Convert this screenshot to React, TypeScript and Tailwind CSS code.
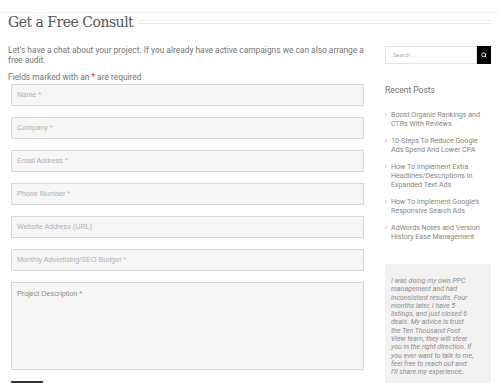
import { Search } from 'lucide-react';

const fields = [
  'Name *',
  'Company *',
  'Email Address *',
  'Phone Number *',
  'Website Address (URL)',
  'Monthly Advertising/SEO Budget *',
];

const posts = [
  ['Boost Organic Rankings and', 'CTRs With Reviews'],
  ['10-Steps To Reduce Google', 'Ads Spend And Lower CPA'],
  ['How To Implement Extra', 'Headlines/Descriptions in', 'Expanded Text Ads'],
  ['How To Implement Google’s', 'Responsive Search Ads'],
  ['AdWords Notes and Version', 'History Ease Management'],
];

const quote = [
  'I was doing my own PPC',
  'management and had',
  'inconsistent results. Four',
  'months later, I have 5',
  'listings, and just closed 6',
  'deals. My advice is trust',
  'the Ten Thousand Foot',
  'View team, they will steer',
  'you in the right direction. If',
  'you ever want to talk to me,',
  'feel free to reach out and',
  'I’ll share my experience..',
];

export default function App() {
  return (
    <div className="w-[500px] h-[383px] overflow-hidden bg-white font-['Roboto',sans-serif]">
      <div className="h-[12px]" />
      <div className="h-[1px] bg-[#f4f4f4]" />
      {/* title row */}
      <div className="flex items-center pl-[8px] pr-[9px] h-[15px] mt-[1px]">
        <h1 className="font-['DejaVu_Serif',serif] text-[14px] leading-none tracking-[-0.5px] text-[#555555] whitespace-nowrap">
          Get a Free Consult
        </h1>
        <div className="flex-1 ml-[5px] flex flex-col gap-[2px]">
          <div className="h-[1px] bg-[#ececec]" />
          <div className="h-[1px] bg-[#ececec]" />
        </div>
      </div>

      <div className="flex pl-[8px] mt-[16px]">
        {/* main column */}
        <div className="w-[356px]">
          <p className="text-[8.4px] leading-[10px] text-[#747474]">
            Let’s have a chat about your project. If you already have active campaigns we can also arrange a free audit.
          </p>
          <p className="mt-[7px] text-[8.4px] leading-[10px] text-[#747474]">
            Fields marked with an <span className="text-[#e0201c]">*</span> are required
          </p>
          <div className="ml-[3px] mt-[2px] flex flex-col gap-[11px]">
            {fields.map((f) => (
              <div
                key={f}
                className="h-[22px] border border-[#d9d9d9] bg-[#f6f6f6] flex items-center pl-[5px] font-['Liberation_Sans',sans-serif] text-[7.2px] text-[#b0b0b0]"
              >
                {f}
              </div>
            ))}
            <div className="h-[88px] border border-[#d9d9d9] bg-[#f6f6f6] pl-[5px] pt-[6px] font-['Liberation_Sans',sans-serif] text-[7.2px] text-[#8a8a8a]">
              Project Description *
            </div>
          </div>
          <div className="ml-[3px] mt-[11px] w-[32px] h-[16px] bg-[#333333]" />
        </div>

        {/* sidebar */}
        <div className="ml-[21px] w-[106px]">
          <div className="flex h-[18px] mt-[1px]">
            <div className="flex-1 border border-[#e4e4e4] flex items-center pl-[7px] text-[5.5px] text-[#aaaaaa]">
              Search ...
            </div>
            <div className="w-[14px] bg-black flex items-center justify-center">
              <Search size={6} strokeWidth={3.5} color="#ffffff" />
            </div>
          </div>
          <div className="mt-[21px] text-[8.5px] leading-[10px] text-[#6f6f6f]">Recent Posts</div>
          <ul className="mt-[15px] flex flex-col gap-[8px]">
            {posts.map((p) => (
              <li key={p[0]} className="flex text-[7.1px] leading-[9px] text-[#858585]">
                <span className="w-[6px] text-[#f07b3a] shrink-0">›</span>
                <span className="whitespace-nowrap">
                  {p.map((l) => (
                    <span key={l} className="block">{l}</span>
                  ))}
                </span>
              </li>
            ))}
          </ul>
          <div className="mt-[23px] bg-[#f3f2f0] pl-[6px] pt-[13px] pb-[10px] h-[140px]">
            <p className="italic text-[7px] leading-[8.3px] text-[#8c8c8c]">
              {quote.map((l) => (
                <span key={l} className="block whitespace-nowrap">{l}</span>
              ))}
            </p>
          </div>
        </div>
      </div>
    </div>
  );
}
